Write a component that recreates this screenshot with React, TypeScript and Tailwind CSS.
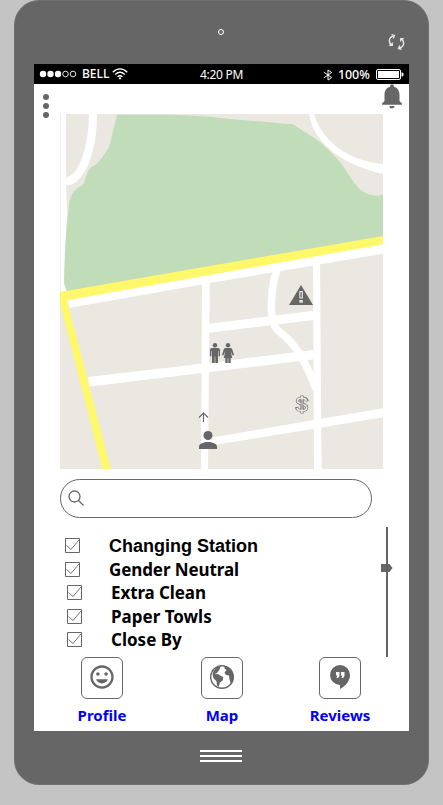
import React from "react";
import { MdMood, MdNotifications, MdPerson } from "react-icons/md";

function StatusBar() {
  return (
    <div className="flex h-5 items-center bg-black text-white">
      <svg className="ml-[5px] h-3 w-[39px] shrink-0" viewBox="0 0 39 12">
        <g fill="#fff">
          <circle cx="4" cy="6" r="3.2" />
          <circle cx="11.5" cy="6" r="3.2" />
          <circle cx="19" cy="6" r="3.2" />
        </g>
        <g fill="none" stroke="#fff" strokeWidth="0.9">
          <circle cx="26.5" cy="6" r="2.8" />
          <circle cx="34" cy="6" r="2.8" />
        </g>
      </svg>
      <span className="ml-1 w-[28px] text-[12px] leading-5 font-medium whitespace-nowrap">BELL</span>
      <svg className="ml-[2px] h-3 w-4 shrink-0" viewBox="0 0 16 12" fill="none" stroke="#fff" strokeWidth="1.4">
        <path d="M.8 4.2C5-.2 11-.2 15.2 4.2M3.2 6.5c3-2.8 6.600-2.800 9.600 0M5.600 8.700c1.500-1.300 3.300-1.300 4.800 0" />
        <circle cx="8" cy="10.300" r="1.100" fill="#fff" stroke="none" />
      </svg>
      <span className="ml-[72px] w-[46px] pt-px text-[12px] leading-5 tracking-[-0.3px] whitespace-nowrap">4:20 PM</span>
      <svg className="mt-[2px] ml-[77px] h-3 w-[10px] shrink-0" viewBox="0 0 10 12" fill="none" stroke="#fff" strokeWidth="1">
        <path d="M.8 3.200 8.700 8.500 5 11V1l3.700 2.500L.8 8.900" />
      </svg>
      <span className="ml-[5px] w-[33px] pt-[2px] text-[12.500px] leading-5 font-medium tracking-[-0.100px] whitespace-nowrap">100%</span>
      <svg className="ml-[5px] h-[11px] w-[28px] shrink-0" viewBox="0 0 28 11">
        <rect x=".5" y=".5" width="24" height="10" rx="1.500" fill="none" stroke="#fff" />
        <path d="M2 2h21v7H2zM25.500 3.500h1l1 1v2l-1 1h-1z" fill="#fff" />
      </svg>
    </div>
  );
}

function TownMap() {
  return (
    <div className="relative ml-[26px] h-[355px] w-[323px] text-[#666]">
      <svg className="block h-[355px] w-[323px]" viewBox="60 114 323 355">
        <rect x="60" y="114" width="323" height="355" fill="#ebe8e1" />
        <path d="M60.700 114H66V182L67 215 64 284 67 291 60.700 292Z" fill="#fff" />
        <path
          d="M117 114.700H170Q210 116 230 119L292.700 124.300Q307 133 320 142 329 150 336.700 158 343 165 347.500 173 353 182 360 189.500 372 198.500 383 194.500V240L68 294 64 283Q65 236 68 215 69 203 70 199 72 192 78 187.500C84 185 84 183 86 177 88 171 89 168 95 165 101 161 105 153 109.300 146.500Z"
          fill="#c1dcb9"
        />
        <path d="M93 114C93 149 82 180 66 181.700" fill="none" stroke="#fff" strokeWidth="8.200" />
        <path d="M309 114H314C322 140 345 160 383 164.300V174C344 165 314 145 309 114Z" fill="#fff" />
        <g fill="#fff">
          <path d="M67 300 383 244V253.700L220 281.300 69 308Z" />
          <path d="M202 280H209.700L208 469H201Z" />
          <path d="M88 377 202 363.700 313.500 350V359.300L208 372.300 89.300 386.500Z" />
          <path d="M209 323.700 314 310.700V320L209 332.700Z" />
          <path d="M313 260H320L321.500 469H314Z" />
          <path d="M208 438.300 314 420 383 408.300V417.300L314 428.700 208 446Z" />
        </g>
        <path
          d="M277 270C271 286 270.500 308 272.500 320 275 331 282 333 287 338 299 350 308 367 316 389"
          fill="none"
          stroke="#fff"
          strokeWidth="7.500"
        />
        <path d="M60 292 383 236V244.300L67 300.300 110.700 469H102.300L60 303Z" fill="#fff86b" />
      </svg>
      <svg className="absolute top-[171px] left-[229px] h-5 w-6" viewBox="0 0 24 20">
        <path d="M12 0 24 20H0Z" fill="#666" />
        <path d="M10.300 6h3.600v7.500h-3.600zM10.300 15h3.600v2.800h-3.600z" fill="#e2dfd9" />
        <path d="M11.500 7.300h1.200v5h-1.200z" fill="#666" />
      </svg>
      <svg className="absolute top-[229px] left-[150px] h-5 w-[10px]" viewBox="0 0 10 20" fill="#666">
        <circle cx="5" cy="2.200" r="2.200" />
        <path d="M2 5h6q2 0 2 2v6.300H8.600V8H8v12H5.300v-6.500h-.6V20H2V8h-.6v5.300H0V7q0-2 2-2z" />
      </svg>
      <svg className="absolute top-[229px] left-[162px] h-5 w-3" viewBox="0 0 12 20" fill="#666">
        <circle cx="6" cy="2.200" r="2.200" />
        <path d="M3.500 5h5q1.300 0 1.700 1.300L12 12l-1.400.6L8.700 8l1.500 7H8.700v5H6.300v-5h-.6v5H3.300v-5H1.800l1.500-7-1.900 4.600L0 12l1.800-5.700Q2.200 5 3.500 5z" />
      </svg>
      <svg className="absolute top-[298px] left-[138px] h-[10px] w-[11px]" viewBox="0 0 11 10" fill="none" stroke="#666" strokeWidth="1.100">
        <path d="M1 5.500 5.500 1 10 5.500M5.500 1v9" />
      </svg>
      <svg className="absolute top-[317px] left-[139px] h-[18px] w-[18px]" viewBox="0 0 18 18" fill="#666">
        <circle cx="9" cy="4.500" r="4.500" />
        <path d="M0 18v-2.500C0 12.500 5 11 9 11s9 1.500 9 4.500V18z" />
      </svg>
      <svg className="absolute top-[281px] left-[235px] h-[19px] w-[14px]" viewBox="0 0 14 19" fill="none">
        <g stroke="#777" strokeWidth="3.300">
          <path d="M12.200 6.300C11.200 2 2.300 2.500 2.400 6c.1 4 9.500 2 9.300 6.500-.2 4-9.200 4.500-10.200-.5M7 .5v18" />
        </g>
        <path d="M11.500 6C10.500 2 2.300 2.500 2.400 6c.1 4 9.500 2 9.300 6.500-.2 4-8.700 4.500-9.700.5M7 1v17" stroke="#ebe8e1" strokeWidth="1.700" />
        <path d="M6.300 4.500v10M7.700 4.500v10" stroke="#777" strokeWidth=".6" />
      </svg>
    </div>
  );
}

function Check() {
  return (
    <svg className="size-[15px] shrink-0" viewBox="0 0 15 15" fill="none" stroke="#666">
      <path d="M.5.5h14v14H.5z" />
      <path d="M1.500 7.500 6 11.500 14 2" strokeWidth=".9" />
    </svg>
  );
}

function Amenities() {
  return (
    <div className="flex h-[130px] w-[340px] flex-col pt-[6px] text-[17px] font-bold text-black">
      <div className="flex h-6 items-center">
        <span className="ml-[31px] flex"><Check /></span>
        <span className="ml-[29px] pt-px font-['Liberation_Sans',Arial,sans-serif] text-[18px] leading-6 tracking-[0px]">Changing Station</span>
      </div>
      <div className="flex h-6 items-center">
        <span className="ml-[31px] flex"><Check /></span>
        <span className="ml-[29px] pt-px leading-6 tracking-[-0.1px]">Gender Neutral</span>
      </div>
      <div className="flex h-[23px] items-center">
        <span className="ml-[33px] flex"><Check /></span>
        <span className="ml-[29px] leading-6 tracking-[-0.1px]">Extra Clean</span>
      </div>
      <div className="flex h-6 items-center">
        <span className="ml-[33px] flex"><Check /></span>
        <span className="ml-[29px] pt-px leading-6">Paper Towls</span>
      </div>
      <div className="flex h-[23px] items-center">
        <span className="ml-[33px] flex"><Check /></span>
        <span className="ml-[29px] leading-6">Close By</span>
      </div>
    </div>
  );
}

function Tab({ label, children }: { label: string; children: React.ReactNode }) {
  return (
    <div className="flex w-20 flex-col items-center">
      <div className="flex size-[42px] items-center justify-center rounded-[6px] border border-[#666] text-[#666]">{children}</div>
      <span className="mt-[4px] text-[15px] leading-6 font-bold whitespace-nowrap text-[#0000f5]">{label}</span>
    </div>
  );
}

export default function App() {
  return (
    <div className="h-[805px] w-[443px] overflow-hidden bg-[#c4c4c4] pl-[14px] font-['Noto_Sans','Open_Sans',sans-serif]">
      <div className="flex h-[785px] w-[415px] flex-col rounded-[25px] border border-[#717171] bg-[#666] px-[19px]">
        <div className="flex h-[63px] shrink-0 items-start">
          <div className="mt-7 ml-[184px] size-[6px] rounded-full border border-white" />
          <svg className="mt-[33px] ml-[164px] h-4 w-[17px]" viewBox="0 0 17 16" fill="none" stroke="#e8e8e8" strokeWidth="1.300">
            <path d="M3.800 11.500C0 8 .5 3.500 5.500 1.800M3.500.700 6.500 1.500 5.300 4.500M1.200 11.400H4.300V8.600" />
            <path d="M13.200 4.500C17 8 16.500 12.500 11.500 14.200M13.500 15.300 10.500 14.500 11.700 11.500M15.800 4.600H12.700V7.400" />
          </svg>
        </div>
        <div className="flex h-[667px] w-[375px] shrink-0 flex-col bg-white">
          <StatusBar />
          <div className="flex h-[30px] items-start justify-between">
            <div className="mt-[10px] ml-[9px] flex flex-col gap-[3px]">
              <i className="size-[6px] rounded-full bg-[#666]" />
              <i className="size-[6px] rounded-full bg-[#666]" />
              <i className="size-[6px] rounded-full bg-[#666]" />
            </div>
            <MdNotifications className="mt-[-3px] mr-[2px] size-[30px] text-[#666]" />
          </div>
          <TownMap />
          <div className="mt-[10px] ml-[26px] flex h-[39px] w-[312px] items-center rounded-full border border-[#666]">
            <svg className="ml-[7px] h-[17px] w-[17px]" viewBox="0 0 17 17" fill="none" stroke="#666" strokeWidth="1.300">
              <circle cx="6.500" cy="6.500" r="5.500" />
              <path d="m10.500 10.500 5 5" />
            </svg>
          </div>
          <div className="mt-[9px] flex">
            <Amenities />
            <svg className="ml-[7px] h-[130px] w-3" viewBox="0 0 12 130" fill="#666">
              <path d="M5 0h2v130H5zM0 37h8.500l3 4-3 4H0z" />
            </svg>
          </div>
          <div className="flex">
            <div className="ml-7">
              <Tab label="Profile">
                <MdMood className="mt-[-3px] size-[28px]" />
              </Tab>
            </div>
            <div className="ml-10">
              <Tab label="Map">
                <svg className="mt-[-2px] size-6" viewBox="0 0 24 24">
                  <circle cx="12" cy="12" r="11.300" fill="none" stroke="#666" strokeWidth="1.400" />
                  <path
                    d="M3.500 6 7 2l3.500-1-.5 2.500L8.500 6 7 8 4.500 9l4 .2 2 1.500 2.800 1.300-.5 3.200-3 2.500-1 4-1.800-1-.5-4.500-3-3-1-4zM14.500 1 20 3.500l3.500 6.500v5l-2.500 4-1.500-4.500L19 10.500l-3-.5-1.500-2.500L16.500 5l-2-1.500z"
                    fill="#666"
                  />
                </svg>
              </Tab>
            </div>
            <div className="ml-[38px]">
              <Tab label="Reviews">
                <svg className="mt-[-2px] h-6 w-5" viewBox="0 0 20 24">
                  <path d="M10 0a10 10 0 0 0 0 20v4c6-3 10-8.500 10-14A10 10 0 0 0 10 0Z" fill="#666" />
                  <path d="M6 7h3.500v4L8 13H6.500L7.300 10.500H6zM11 7h3.500v4L13 13h-1.500l.8-2.500H11z" fill="#fff" />
                </svg>
              </Tab>
            </div>
          </div>
        </div>
        <div className="mt-[19px] ml-[166px] flex flex-col gap-[3px]">
          <div className="h-[2px] w-[42px] bg-white" />
          <div className="h-[2px] w-[42px] bg-white" />
          <div className="h-[2px] w-[42px] bg-white" />
        </div>
      </div>
    </div>
  );
}
